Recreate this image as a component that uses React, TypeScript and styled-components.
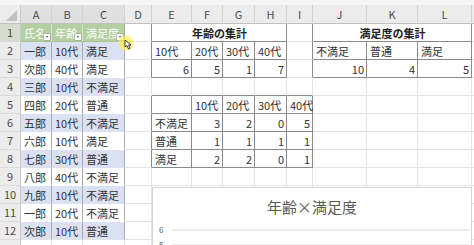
import React from 'react';
import styled, { createGlobalStyle } from 'styled-components';

const GlobalStyle = createGlobalStyle`
  html, body { margin: 0; padding: 0; width: 474px; height: 245px; overflow: hidden; background: #fff; }
  #root { width: 474px; height: 245px; }
`;

const COLS = [21, 31, 31, 42, 27, 40, 31, 32, 32, 26, 54, 51, 54, 10];
const LETTERS = ['A', 'B', 'C', 'D', 'E', 'F', 'G', 'H', 'I', 'J', 'K', 'L', 'M'];

const GRID = '#e4e4e4';
const BOX = '#8a8a8a';
const TBL = '#a9a9a9';
const BLUE = '#d9e1f2';
const GREEN = '#b4cfa1';
const FONT = `"Noto Sans CJK JP", "Noto Sans", sans-serif`;

type Spec = {
  t?: string;
  align?: 'left' | 'right' | 'center';
  bold?: boolean;
  bg?: string;
  color?: string;
  br?: string;
  bb?: string;
  span?: number;
  filter?: boolean;
};

const Sheet = styled.div`
  position: relative;
  width: 474px;
  height: 245px;
  overflow: hidden;
  font-family: ${FONT};
  background: #fff;
`;

const Grid = styled.div`
  display: grid;
  grid-template-columns: ${COLS.map((c) => c + 'px').join(' ')};
  grid-template-rows: 5px 19px repeat(13, 18px);
`;

const TopStrip = styled.div`
  grid-column: 1 / -1;
  background: #f6f6f6;
`;

const Corner = styled.div`
  position: relative;
  background: #ececec;
  border-right: 1px solid #c8c8c8;
  border-bottom: 1px solid #c0c0c0;
  box-sizing: border-box;
  &::after {
    content: '';
    position: absolute;
    right: 3px;
    bottom: 2px;
    width: 0;
    height: 0;
    border-left: 11px solid transparent;
    border-bottom: 11px solid #c2c2c2;
  }
`;

const ColHeader = styled.div<{ $sel?: boolean }>`
  box-sizing: border-box;
  display: flex;
  align-items: center;
  justify-content: center;
  font-size: 11px;
  color: #4a4a4a;
  background: ${(p) => (p.$sel ? '#e0e0e0' : '#ececec')};
  border-right: 1px solid #d2d2d2;
  border-bottom: 1px solid #c0c0c0;
  line-height: 1;
`;

const RowHeader = styled.div<{ $sel?: boolean }>`
  box-sizing: border-box;
  display: flex;
  align-items: center;
  justify-content: center;
  font-size: 11px;
  color: #4a4a4a;
  background: ${(p) => (p.$sel ? '#d6ddd0' : '#ececec')};
  border-right: 1px solid #c8c8c8;
  border-bottom: 1px solid #dadada;
  line-height: 1;
`;

const Cell = styled.div<{
  $bg: string;
  $color: string;
  $align: string;
  $bold: boolean;
  $br: string;
  $bb: string;
  $span: number;
}>`
  position: relative;
  box-sizing: border-box;
  grid-column: span ${(p) => p.$span};
  display: flex;
  align-items: center;
  justify-content: ${(p) =>
    p.$align === 'right' ? 'flex-end' : p.$align === 'center' ? 'center' : 'flex-start'};
  padding: 1px 2px 0 3px;
  font-size: 11px;
  line-height: 1;
  white-space: nowrap;
  overflow: visible;
  font-weight: ${(p) => (p.$bold ? 700 : 400)};
  color: ${(p) => p.$color};
  background: ${(p) => p.$bg};
  border-right: 1px solid ${(p) => p.$br};
  border-bottom: 1px solid ${(p) => p.$bb};
`;

const FilterButton = styled.span`
  position: absolute;
  right: 1px;
  bottom: 1px;
  width: 6px;
  height: 6px;
  background: #fff;
  box-shadow: 0 0 0 0.5px #9a9a9a;
  &::after {
    content: '';
    position: absolute;
    left: 1.5px;
    top: 2px;
    border-left: 1.5px solid transparent;
    border-right: 1.5px solid transparent;
    border-top: 2px solid #444;
  }
`;

const Chart = styled.div`
  position: absolute;
  left: 152px;
  top: 187px;
  width: 320px;
  height: 90px;
  box-sizing: border-box;
  background: #fff;
  border: 1px solid #d4d4d4;
  display: flex;
  flex-direction: column;
  align-items: stretch;
`;

const ChartTitle = styled.div`
  padding-top: 10px;
  height: 18px;
  line-height: 18px;
  text-align: center;
  font-size: 15px;
  color: #595959;
  letter-spacing: 0;
`;

const Plot = styled.svg`
  display: block;
  width: 318px;
  height: 40px;
`;

const Glow = styled.div`
  position: absolute;
  left: 118px;
  top: 35px;
  width: 16px;
  height: 16px;
  border-radius: 50%;
  background: radial-gradient(circle, rgba(255, 236, 60, 0.95) 0%, rgba(255, 240, 90, 0.75) 45%, rgba(255, 245, 150, 0) 100%);
  pointer-events: none;
`;

const Pointer = styled.svg`
  position: absolute;
  left: 124px;
  top: 40px;
  width: 9px;
  height: 10px;
  pointer-events: none;
`;

const base = (): Spec => ({});

function buildRows(): Spec[][] {
  const rows: Spec[][] = [];
  const data: [string, string, string][] = [
    ['一郎', '10代', '満足'],
    ['次郎', '40代', '満足'],
    ['三郎', '10代', '不満足'],
    ['四郎', '20代', '普通'],
    ['五郎', '10代', '不満足'],
    ['六郎', '10代', '満足'],
    ['七郎', '30代', '普通'],
    ['八郎', '40代', '不満足'],
    ['九郎', '10代', '不満足'],
    ['一郎', '20代', '不満足'],
    ['次郎', '10代', '普通'],
  ];

  rows.push([
    { t: '氏名', bg: GREEN, color: '#fbfdf9', br: '#d4e4c8', bb: '#a5c490', filter: true },
    { t: '年齢', bg: GREEN, color: '#fbfdf9', br: '#d4e4c8', bb: '#a5c490', filter: true },
    { t: '満足度', bg: GREEN, color: '#fbfdf9', br: TBL, bb: '#a5c490', filter: true },
    { br: BOX },
    { t: '年齢の集計', span: 4, bold: true, align: 'center', br: BOX, bb: BOX, color: '#222' },
    { br: BOX },
    { t: '満足度の集計', span: 3, bold: true, align: 'center', br: BOX, bb: BOX, color: '#222' },
    base(),
  ]);

  const cross: Record<number, string[]> = {
    5: ['', '10代', '20代', '30代', '40代'],
    6: ['不満足', '3', '2', '0', '5'],
    7: ['普通', '1', '1', '1', '1'],
    8: ['満足', '2', '2', '0', '1'],
  };

  for (let r = 2; r <= 13; r++) {
    const row: Spec[] = [];
    const d = data[r - 2];
    if (d) {
      const bg = r % 2 === 0 ? BLUE : '#fff';
      const bb = r === 12 ? GRID : bg;
      row.push({ t: d[0], bg, br: TBL, bb });
      row.push({ t: d[1], bg, br: TBL, bb });
      row.push({ t: d[2], bg, br: TBL, bb });
    } else {
      row.push(base(), base(), base());
    }
    const boxLeft = r === 2 || r === 3 || (r >= 5 && r <= 8);
    row.push(boxLeft ? { br: BOX } : base());
    if (r === 2) {
      ['10代', '20代', '30代', '40代'].forEach((t) => row.push({ t, br: BOX, bb: BOX }));
      row.push({ br: BOX });
    } else if (r === 3) {
      ['6', '5', '1', '7'].forEach((t) => row.push({ t, align: 'right', br: BOX, bb: BOX }));
      row.push({ br: BOX });
    } else if (r === 4) {
      for (let i = 0; i < 5; i++) row.push({ bb: BOX });
    } else if (cross[r]) {
      cross[r].forEach((t, i) =>
        row.push({ t, align: r === 5 || i === 0 ? 'left' : 'right', br: BOX, bb: BOX })
      );
    } else {
      for (let i = 0; i < 5; i++) row.push(base());
    }
    if (r === 2) {
      ['不満足', '普通', '満足'].forEach((t) => row.push({ t, br: BOX, bb: BOX }));
    } else if (r === 3) {
      ['10', '4', '5'].forEach((t) => row.push({ t, align: 'right', br: BOX, bb: BOX }));
    } else {
      row.push(base(), base(), base());
    }
    row.push(base());
    rows.push(row);
  }
  return rows;
}

const ROWS = buildRows();

export default function App() {
  return (
    <>
      <GlobalStyle />
      <Sheet>
        <Grid>
          <TopStrip />
          <Corner />
          {LETTERS.map((l, i) => (
            <ColHeader key={l} $sel={i < 3}>
              {l === 'M' ? '' : l}
            </ColHeader>
          ))}
          {ROWS.map((row, ri) => (
            <React.Fragment key={ri}>
              <RowHeader $sel={ri === 0}>{ri < 12 ? ri + 1 : ''}</RowHeader>
              {row.map((c, ci) => (
                <Cell
                  key={ci}
                  $bg={c.bg ?? '#fff'}
                  $color={c.color ?? '#333'}
                  $align={c.align ?? 'left'}
                  $bold={!!c.bold}
                  $br={c.br ?? GRID}
                  $bb={c.bb ?? GRID}
                  $span={c.span ?? 1}
                >
                  {c.t}
                  {c.filter && <FilterButton />}
                </Cell>
              ))}
            </React.Fragment>
          ))}
        </Grid>
        <Chart>
          <ChartTitle>年齢×満足度</ChartTitle>
          <Plot viewBox="0 0 318 40">
            <line x1="19" y1="14" x2="316" y2="14" stroke="#d9d9d9" strokeWidth="1" />
            <line x1="19" y1="29" x2="316" y2="29" stroke="#d9d9d9" strokeWidth="1" />
            <text x="6" y="17" fontSize="8" fill="#595959" fontFamily={FONT}>
              6
            </text>
            <text x="6" y="32" fontSize="8" fill="#595959" fontFamily={FONT}>
              5
            </text>
          </Plot>
        </Chart>
        <Glow />
        <Pointer viewBox="0 0 9 10">
          <path d="M1 0 L1 7 L3 5.5 L4.5 9 L6 8.3 L4.5 5 L7 5 Z" fill="#fff" stroke="#111" strokeWidth="0.8" />
        </Pointer>
      </Sheet>
    </>
  );
}
